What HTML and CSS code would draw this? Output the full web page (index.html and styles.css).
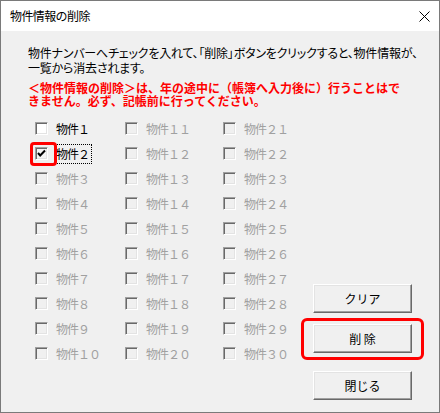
FILE: index.html
```html
<!DOCTYPE html>
<html lang="ja">
<head>
<meta charset="utf-8">
<link rel="stylesheet" href="styles.css">
</head>
<body>
<div class="window">
  <div class="titlebar">
    <span class="title">物件情報の削除</span>
    <svg class="close" width="11" height="11" viewBox="0 0 11 11"><path d="M0.5 0.5 L10.5 10.5 M10.5 0.5 L0.5 10.5" stroke="#000" stroke-width="1" fill="none"/></svg>
  </div>
  <div class="content">
    <p class="info">物件ナンバーへチェックを入れて、「削除」ボタンをクリックすると、物件情報が、<br>一覧から消去されます。</p>
    <p class="warn">＜物件情報の削除＞は、年の途中に（帳簿へ入力後に）行うことはで<br>きません。必ず、記帳前に行ってください。</p>
    <div class="main">
      <div class="grid">
        <div class="item"><span class="box"></span><span class="lbl">物件１</span></div>
        <div class="item"><span class="box checked hl"><svg width="11" height="11" viewBox="0 0 11 11"><polyline points="2,5 4.2,7.5 9,2.5" stroke="#000" stroke-width="2" fill="none"/></svg></span><span class="lbl focus">物件２</span></div>
        <div class="item off"><span class="box"></span><span class="lbl">物件３</span></div>
        <div class="item off"><span class="box"></span><span class="lbl">物件４</span></div>
        <div class="item off"><span class="box"></span><span class="lbl">物件５</span></div>
        <div class="item off"><span class="box"></span><span class="lbl">物件６</span></div>
        <div class="item off"><span class="box"></span><span class="lbl">物件７</span></div>
        <div class="item off"><span class="box"></span><span class="lbl">物件８</span></div>
        <div class="item off"><span class="box"></span><span class="lbl">物件９</span></div>
        <div class="item off"><span class="box"></span><span class="lbl">物件１０</span></div>
        <div class="item off"><span class="box"></span><span class="lbl">物件１１</span></div>
        <div class="item off"><span class="box"></span><span class="lbl">物件１２</span></div>
        <div class="item off"><span class="box"></span><span class="lbl">物件１３</span></div>
        <div class="item off"><span class="box"></span><span class="lbl">物件１４</span></div>
        <div class="item off"><span class="box"></span><span class="lbl">物件１５</span></div>
        <div class="item off"><span class="box"></span><span class="lbl">物件１６</span></div>
        <div class="item off"><span class="box"></span><span class="lbl">物件１７</span></div>
        <div class="item off"><span class="box"></span><span class="lbl">物件１８</span></div>
        <div class="item off"><span class="box"></span><span class="lbl">物件１９</span></div>
        <div class="item off"><span class="box"></span><span class="lbl">物件２０</span></div>
        <div class="item off"><span class="box"></span><span class="lbl">物件２１</span></div>
        <div class="item off"><span class="box"></span><span class="lbl">物件２２</span></div>
        <div class="item off"><span class="box"></span><span class="lbl">物件２３</span></div>
        <div class="item off"><span class="box"></span><span class="lbl">物件２４</span></div>
        <div class="item off"><span class="box"></span><span class="lbl">物件２５</span></div>
        <div class="item off"><span class="box"></span><span class="lbl">物件２６</span></div>
        <div class="item off"><span class="box"></span><span class="lbl">物件２７</span></div>
        <div class="item off"><span class="box"></span><span class="lbl">物件２８</span></div>
        <div class="item off"><span class="box"></span><span class="lbl">物件２９</span></div>
        <div class="item off"><span class="box"></span><span class="lbl">物件３０</span></div>
      </div>
      <div class="buttons">
        <button class="btn">クリア</button>
        <div class="btn-hl"><button class="btn">削 除</button></div>
        <button class="btn btn-close">閉じる</button>
      </div>
    </div>
  </div>
</div>
</body>
</html>
```

FILE: styles.css
```css
html, body {
  margin: 0;
  padding: 0;
  background: #f0f0f0;
}
body {
  font-family: "Noto Sans CJK JP", "Noto Sans", sans-serif;
  font-size: 12px;
  color: #000;
}
.window {
  width: 440px;
  height: 413px;
  box-sizing: border-box;
  border: 1px solid #7a7a7a;
  background: #f0f0f0;
  overflow: hidden;
}
.titlebar {
  height: 30px;
  background: #fff;
  display: flex;
  align-items: center;
  justify-content: space-between;
  padding: 0 9px 0 9px;
}
.title {
  font-size: 12px;
  letter-spacing: -0.6px;
  line-height: 14px;
}
.close {
  display: block;
}
.content {
  padding: 14px 27px 0 27px;
}
.info {
  margin: 0;
  line-height: 15px;
  white-space: nowrap;
  font-feature-settings: "palt";
  letter-spacing: -0.2px;
}
.warn {
  margin: 6px 0 0 0;
  line-height: 13px;
  color: #ff0000;
  font-weight: bold;
  white-space: nowrap;
}
.main {
  display: flex;
  margin-top: 9px;
}
.grid {
  display: grid;
  grid-auto-flow: column;
  grid-template-rows: repeat(10, 25px);
  grid-template-columns: 90px 98px 78px;
  margin-left: 7px;
}
.item {
  display: flex;
  align-items: center;
  gap: 7px;
  white-space: nowrap;
}
.box {
  position: relative;
  width: 13px;
  height: 13px;
  box-sizing: border-box;
  border: 1px solid;
  border-color: #a0a0a0 #ffffff #ffffff #a0a0a0;
  box-shadow: inset 1px 1px 0 #696969, inset -1px -1px 0 #e3e3e3;
  background: #fff;
  flex: none;
}
.box svg {
  position: absolute;
  left: 0;
  top: 0;
}
.box.checked {
  background: #f4f4f4;
}
.box.hl::after {
  content: "";
  position: absolute;
  left: -6px;
  top: -6px;
  width: 27px;
  height: 24px;
  box-sizing: border-box;
  border: 3px solid #ff0000;
  border-radius: 4px;
}
.item.off .box {
  background: #f0f0f0;
}
.lbl {
  padding: 2px 2px 2px 1px;
  line-height: 14px;
  letter-spacing: -1px;
}
.lbl.focus {
  outline: 1px dotted #000;
}
.item.off .lbl {
  color: #a0a0a0;
}
.buttons {
  margin-left: auto;
  margin-top: 168px;
  width: 99px;
  display: flex;
  flex-direction: column;
}
.btn {
  display: block;
  width: 99px;
  height: 29px;
  margin: 0;
  padding: 0;
  box-sizing: border-box;
  font-family: "Noto Sans CJK JP", "Noto Sans", sans-serif;
  font-size: 12px;
  color: #000;
  background: #f0f0f0;
  border: 1px solid;
  border-color: #ffffff #696969 #696969 #ffffff;
  box-shadow: inset -1px -1px 0 #a0a0a0, inset 1px 1px 0 #e3e3e3;
}
.btn-hl {
  position: relative;
  margin-top: 11px;
}
.btn-hl::after {
  content: "";
  position: absolute;
  left: -12px;
  top: -6px;
  width: 123px;
  height: 42px;
  box-sizing: border-box;
  border: 3px solid #ff0000;
  border-radius: 6px;
}
.btn-close {
  margin-top: 18px;
}
```
